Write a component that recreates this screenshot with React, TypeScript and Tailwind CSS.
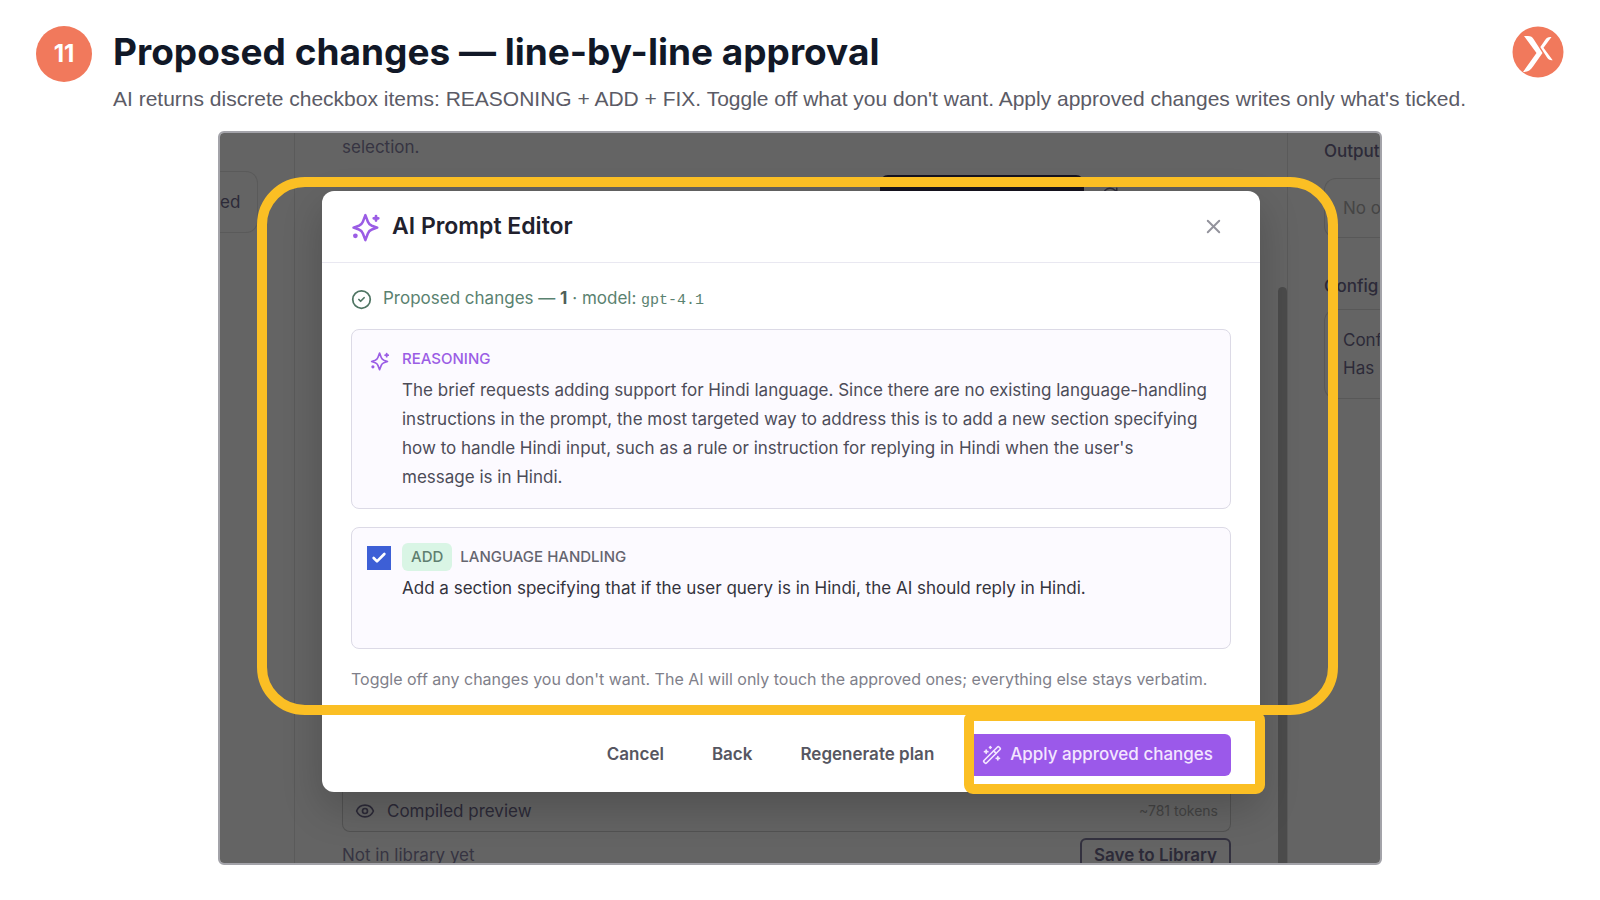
import { Check, CircleCheck, Eye, RotateCw, WandSparkles, X } from "lucide-react";

const Logo = () => (
  <svg viewBox="0 0 52 52" className="size-[52px] shrink-0" role="img" aria-label="Logo">
    <circle cx="26" cy="26" r="25.5" fill="#f1795c" />
    <path
      d="M12 10h4c3 0 4.200 1 5.700 3.200L30.500 27 21 40.500C18.500 44.200 16 46 11 46L24.500 27z"
      fill="#fff"
    />
    <path
      d="M39.500 11c-3.500-.3-4.600.5-6.200 2.800L28.300 21l6.400 10c1.700 2.700 3.300 3.500 6 3.200L31.500 21.800z"
      fill="#fff"
    />
  </svg>
);

const SparkleIcon = ({ className }: { className?: string }) => (
  <svg
    viewBox="0 0 24 24"
    fill="none"
    stroke="currentColor"
    strokeWidth="2"
    strokeLinecap="round"
    strokeLinejoin="round"
    className={className}
    aria-hidden="true"
  >
    <path d="M11.500 2.500l2 5.300q.9 2.300 3.200 3.200L21 12.500l-4.300 1.500q-2.300.9-3.200 3.200l-2 5.300-2-5.300q-.9-2.300-3.200-3.200L2 12.500l4.300-1.500q2.300-.9 3.200-3.200z" />
    <path d="M20 3.200v3.600M18.200 5h3.600" strokeWidth="2.200" />
    <circle cx="3.500" cy="19" r=".9" fill="currentColor" />
  </svg>
);

const Workspace = () => (
  <div
    aria-hidden="true"
    className="absolute inset-0 flex overflow-hidden bg-[#646464] text-[17px] leading-7 text-[#2c2a38]"
  >
    {/* LEFT COLUMN */}
    <div className="w-[75px] shrink-0 border-r border-[#5a5a5a] pt-[38px]">
      <div className="flex h-[62px] w-[38px] items-center rounded-r-xl border border-l-0 border-[#5a5a5a]">
        ed
      </div>
    </div>
    {/* MIDDLE COLUMN */}
    <div className="flex flex-1 flex-col pr-[47px] pl-[47px]">
      <p className="text-[#363442]">selection.</p>
      <div className="mt-[14px] mr-[112px] flex items-center justify-end gap-[17px]">
        <div className="h-10 w-[204px] rounded-lg bg-[#15131f]" />
        <RotateCw size={18} />
      </div>
      <div className="mt-auto flex items-center gap-3 rounded-b-lg border border-t-0 border-[#525252] px-3 pt-[10px] pb-[6px]">
        <Eye size={20} />
        <span>Compiled preview</span>
        <span className="ml-auto text-sm text-[#434343]">~781 tokens</span>
      </div>
      <div className="-mb-[19px] flex items-start justify-between pt-[6px]">
        <span className="pt-[3px] text-[#363442]">Not in library yet</span>
        <span className="rounded-md border-2 border-[#33313f] px-3 pt-px pb-[11px] font-semibold">
          Save to Library
        </span>
      </div>
    </div>
    <div className="w-[9px] shrink-0 pt-[154px]">
      <div className="h-full rounded-t-full bg-[#4b4b4b]" />
    </div>
    {/* RIGHT COLUMN */}
    <div className="w-[93px] shrink-0 overflow-hidden border-l border-[#5a5a5a] pl-[36px] whitespace-nowrap">
      <p className="pt-1 font-medium">Output</p>
      <div className="mt-[13px] flex h-[60px] items-center rounded-l-xl border border-r-0 border-[#585858] pl-[18px] text-[#454545]">
        No o
      </div>
      <p className="mt-[34px] font-medium">Config</p>
      <div className="mt-[9px] rounded-l-xl border border-r-0 border-[#585858] py-4 pl-[18px]">
        <p>Conf</p>
        <p>Has</p>
      </div>
    </div>
  </div>
);

const PromptEditor = () => (
  <section
    role="dialog"
    aria-labelledby="editor-title"
    className="relative rounded-xl bg-white shadow-[0_16px_40px_rgba(0,0,0,0.2)]"
  >
    <header className="flex h-[72px] items-center gap-[11px] border-b border-[#e9e8f1] pr-[35px] pl-[29px]">
      <SparkleIcon className="size-[30px] text-[#9b5de5]" />
      <h2 id="editor-title" className="text-[23px] font-semibold text-[#21212d]">
        AI Prompt Editor
      </h2>
      <button type="button" aria-label="Close" className="ml-auto text-[#93939c]">
        <X size={23} strokeWidth={2} />
      </button>
    </header>
    <div className="px-[29px]">
      <div className="flex items-center gap-[11px] pt-[21px] text-[17px] leading-7 text-[#5a8270]">
        <CircleCheck size={21} className="text-[#4f7563]" />
        <p>
          Proposed changes — <b className="text-[#4f5f58]">1</b> · model:{" "}
          <code className="font-['Liberation_Mono',monospace] text-[15px]">gpt-4.1</code>
        </p>
      </div>
      <div className="mt-[14px] flex gap-3 rounded-lg border border-[#dcdae6] bg-[#fcfaff] pt-[15px] pr-3 pb-4 pl-[18px]">
        <SparkleIcon className="mt-[6px] size-5 shrink-0 text-[#9b5de5]" />
        <div>
          <h3 className="mb-[3px] text-[15px] leading-7 font-medium text-[#9b5de5]">REASONING</h3>
          <p className="text-[17px] leading-[29px] text-[#4c4c58]">
            The brief requests adding support for Hindi language. Since there are no existing
            language-handling instructions in the prompt, the most targeted way to address this is
            to add a new section specifying how to handle Hindi input, such as a rule or instruction
            for replying in Hindi when the user's
            <br />
            message is in Hindi.
          </p>
        </div>
      </div>
      <div className="mt-[18px] flex min-h-[122px] gap-[11px] rounded-lg border border-[#dcdae6] bg-[#fcfaff] pt-[15px] pr-3 pl-[15px]">
        <span className="relative mt-[3px] size-6 shrink-0">
          <input
            id="change-add"
            type="checkbox"
            defaultChecked
            className="peer size-6 appearance-none border border-[#3d5fd6] checked:bg-[#3d5fd6]"
          />
          <Check
            size={16}
            strokeWidth={4}
            className="pointer-events-none absolute top-1 left-1 hidden text-white peer-checked:block"
          />
        </span>
        <label htmlFor="change-add">
          <span className="flex items-center gap-2 text-[15px] leading-7 font-medium text-[#65656f]">
            <span className="rounded-md bg-[#d9f5e5] px-[9px] text-[#5f7f70]">ADD</span>
            LANGUAGE HANDLING
          </span>
          <span className="mt-[3px] block text-[17px] leading-[29px] text-[#33333d]">
            Add a section specifying that if the user query is in Hindi, the AI should reply in
            Hindi.
          </span>
        </label>
      </div>
      <p className="pt-4 text-base leading-7 text-[#7f7f8a]">
        Toggle off any changes you don't want. The AI will only touch the approved ones; everything
        else stays verbatim.
      </p>
    </div>
    <footer className="flex items-center justify-end gap-3 px-[29px] pt-[41px] pb-4 text-[17px] font-semibold text-[#565661]">
      <button type="button" className="h-[42px] px-[18px]">
        Cancel
      </button>
      <button type="button" className="h-[42px] px-[18px]">
        Back
      </button>
      <button type="button" className="h-[42px] px-[18px]">
        Regenerate plan
      </button>
      <div className="relative">
        <button
          type="button"
          className="flex h-[42px] items-center gap-2 rounded-md bg-[#9b59ea] px-[18px] font-medium text-[#f3e6ff]"
        >
          <WandSparkles size={20} />
          Apply approved changes
        </button>
        <div className="pointer-events-none absolute -top-[23px] -right-[34px] -bottom-[18px] left-0 rounded-[9px] border-10 border-[#fbbf24]" />
      </div>
    </footer>
  </section>
);

const App = () => {
  return (
    <main className="min-h-screen bg-white px-9 pt-[26px] pb-8 font-[Inter,sans-serif]">
      <header className="flex items-start">
        <div className="flex size-14 shrink-0 items-center justify-center rounded-full bg-[#f1795c] text-2xl font-bold text-white">
          11
        </div>
        <div className="ml-[21px] flex-1">
          <h1 className="text-[37px] leading-[52px] font-bold text-[#111827]">
            Proposed changes — line-by-line approval
          </h1>
          <p className="mt-[5px] font-['Liberation_Sans',sans-serif] text-[21px] leading-8 text-[#5b5b66]">
            AI returns discrete checkbox items: REASONING + ADD + FIX. Toggle off what you don't
            want. Apply approved changes writes only what's ticked.
          </p>
        </div>
        <Logo />
      </header>
      <div className="relative mx-auto mt-4 max-w-[1164px] overflow-hidden rounded-md border-2 border-[#a3a3a9] pt-[58px] pr-[120px] pb-[71px] pl-[102px]">
        <Workspace />
        <PromptEditor />
        <div className="pointer-events-none absolute top-[44px] right-[42px] bottom-[148px] left-[37px] rounded-[48px] border-10 border-[#fbbf24]" />
      </div>
    </main>
  );
};

export default App;
